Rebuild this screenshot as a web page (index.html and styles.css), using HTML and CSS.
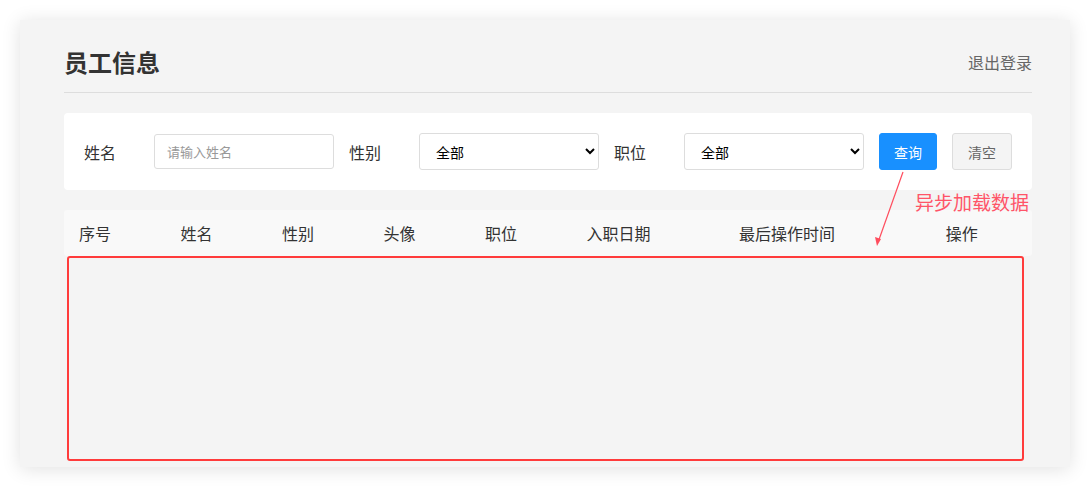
FILE: index.html
```html
<!DOCTYPE html>
<html lang="zh-CN">

<head>
  <meta charset="UTF-8">
  <meta name="viewport" content="width=device-width, initial-scale=1.0">
  <title>员工信息</title>
  <link rel="stylesheet" href="styles.css">
</head>

<body>
  <div class="card">
    <div class="header">
      <h1>员工信息</h1>
      <a class="logout" href="#">退出登录</a>
    </div>

    <form class="search">
      <label for="name">姓名</label>
      <input id="name" type="text" placeholder="请输入姓名">
      <label for="gender">性别</label>
      <select id="gender">
        <option>全部</option>
        <option>男</option>
        <option>女</option>
      </select>
      <label for="job">职位</label>
      <select id="job">
        <option>全部</option>
        <option>班主任</option>
        <option>讲师</option>
      </select>
      <button type="button" class="btn primary">查询</button>
      <button type="reset" class="btn">清空</button>
    </form>

    <div class="table">
      <div class="thead">
        <span>序号</span>
        <span>姓名</span>
        <span>性别</span>
        <span>头像</span>
        <span>职位</span>
        <span>入职日期</span>
        <span class="center">最后操作时间</span>
        <span class="center">操作</span>
      </div>
      <div class="tbody"></div>
    </div>

    <!-- annotation -->
    <div class="mark-box"></div>
    <svg class="mark-arrow" width="40" height="80" viewBox="0 0 40 80">
      <line x1="33" y1="1" x2="8.5" y2="70" stroke="#ff4d5e" stroke-width="1.2" />
      <polygon points="7,75 5,66 11,68" fill="#ff4d5e" />
    </svg>
    <span class="mark-text">异步加载数据</span>
  </div>
</body>

</html>
```

FILE: styles.css
```css
body,
html {
  margin: 0;
  padding: 0;
  background-color: white;
  font-family: "Noto Sans CJK SC", "Microsoft YaHei", sans-serif;
  color: #333;
}

.card {
  position: relative;
  box-sizing: border-box;
  width: 1050px;
  height: 447px;
  margin: 20px;
  padding: 0 38px 0 44px;
  background-color: #f4f4f4;
  box-shadow: 0 2px 18px rgba(0, 0, 0, .12);
}

.header {
  display: flex;
  justify-content: space-between;
  align-items: center;
  padding: 26px 0 14px;
  border-bottom: 1px solid #ddd;
}

.header h1 {
  margin: 0;
  font-size: 24px;
  line-height: 32px;
  font-weight: bold;
  color: #333;
}

.header .logout {
  font-size: 16px;
  line-height: 24px;
  color: #666;
  text-decoration: none;
}

.search {
  display: flex;
  align-items: center;
  gap: 15px;
  height: 77px;
  margin-top: 20px;
  padding: 0 20px;
  background-color: white;
  border-radius: 4px;
}

.search label {
  width: 55px;
  font-size: 16px;
  line-height: 20px;
}

.search input,
.search select {
  box-sizing: border-box;
  width: 180px;
  border: 1px solid #ddd;
  border-radius: 3px;
  background-color: white;
  font-family: inherit;
  outline: none;
}

.search input {
  height: 35px;
  padding: 0 12px;
  font-size: 13px;
}

.search input::placeholder {
  color: #999;
}

.search select {
  height: 37px;
  padding: 0 12px;
  font-size: 14px;
  color: #000;
}

.btn {
  box-sizing: border-box;
  width: 60px;
  height: 37px;
  padding: 0;
  border: 1px solid #ddd;
  border-radius: 3px;
  background-color: #f4f4f4;
  color: #666;
  font-family: inherit;
  font-size: 14px;
  white-space: nowrap;
}

.btn.primary {
  width: 58px;
  border-color: #1890ff;
  background-color: #1890ff;
  color: white;
}

.table {
  margin-top: 20px;
}

.thead {
  display: grid;
  grid-template-columns: repeat(5, 101.5px) 115px 201px 1fr;
  align-items: center;
  height: 46px;
  background-color: #f9f9f9;
  border-radius: 3px;
  font-size: 16px;
  line-height: 20px;
}

.thead span {
  padding-left: 15px;
}

.thead span.center {
  padding-left: 0;
  text-align: center;
}

.thead span.center:last-child {
  padding-left: 4px;
}

.mark-box {
  position: absolute;
  left: 47px;
  top: 236px;
  width: 957px;
  height: 205px;
  box-sizing: border-box;
  border: 2px solid #ff3b3b;
  border-radius: 3px;
}

.mark-arrow {
  position: absolute;
  left: 850px;
  top: 151px;
}

.mark-text {
  position: absolute;
  left: 895px;
  top: 170px;
  font-size: 19px;
  line-height: 24px;
  color: #ff5468;
}
```
